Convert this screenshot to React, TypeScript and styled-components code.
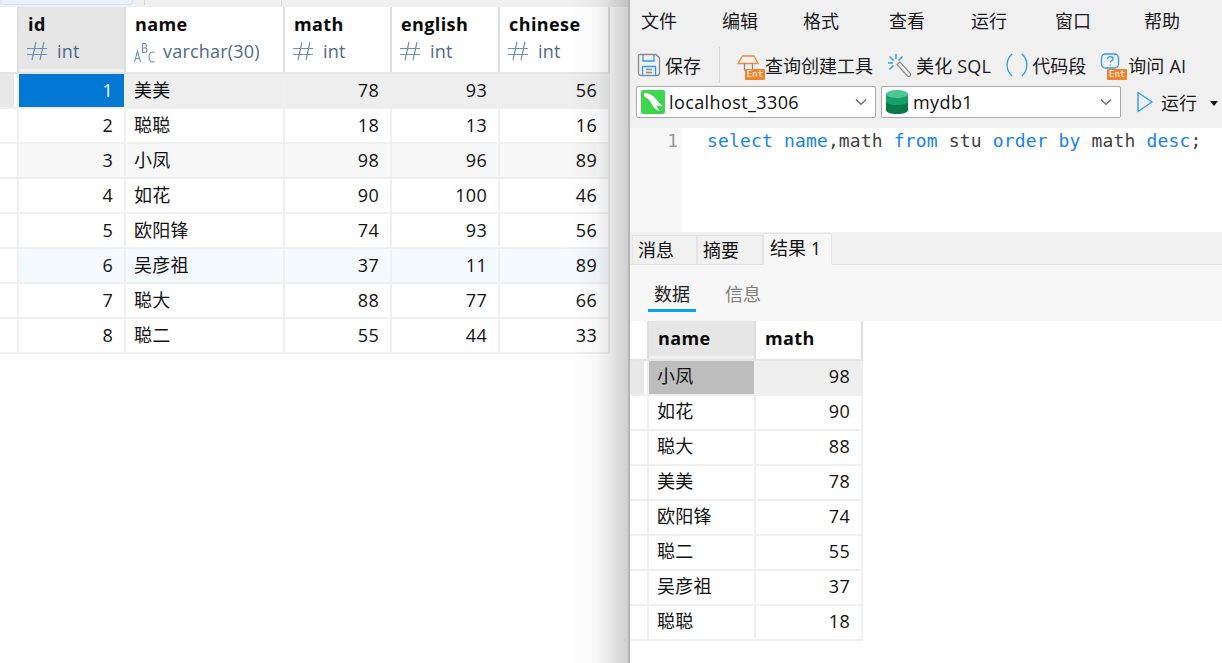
import React from 'react';
import styled, { createGlobalStyle } from 'styled-components';

const FONT = `"Open Sans", "Noto Sans CJK SC", sans-serif`;

const Global = createGlobalStyle`
  html, body { margin: 0; padding: 0; height: 100%; overflow: hidden; background: #fff; }
  #root { height: 663px; }
  * { box-sizing: border-box; }
`;

const Page = styled.div`
  display: flex;
  width: 1222px;
  height: 663px;
  font-family: ${FONT};
  font-size: 18px;
  color: #111;
  overflow: hidden;
`;

/* ---------- left window ---------- */
const LeftWindow = styled.section`
  width: 628px;
  flex: none;
  display: flex;
  flex-direction: column;
`;
const TopStrip = styled.div`
  height: 7px;
  background: #f0f0f0;
  display: flex;
  flex: none;
`;
const StripTab = styled.div`
  width: 133px;
  height: 5px;
  background: #e6f2fd;
  border: 1px solid #cfe4fa;
  border-top: 0;
  border-radius: 0 0 3px 3px;
`;
const StripDivider = styled.div<{ $ml: number }>`
  width: 1px;
  height: 5px;
  margin-left: ${p => p.$ml}px;
  background: #d8d8d8;
`;

const Table = styled.div`
  display: flex;
  flex-direction: column;
  width: fit-content;
`;
const HeaderRow = styled.div<{ $cols: string; $h: number }>`
  display: grid;
  grid-template-columns: ${p => p.$cols};
  column-gap: 2px;
  height: ${p => p.$h}px;
  background: #dedede;
  border-bottom: 2px solid #e4e4e4;
  padding-right: 2px;
`;
const HeaderCorner = styled.div`
  background: #fff;
`;
const HeaderCell = styled.div<{ $active?: boolean }>`
  background: ${p => (p.$active ? 'linear-gradient(#e6e6e6 0, #e6e6e6 calc(100% - 3px), #f0f0f0 calc(100% - 3px))' : '#fff')};
  padding: 4px 9px 0;
  overflow: hidden;
`;
const ColName = styled.div`
  font-weight: 700;
  font-size: 18px;
  letter-spacing: 0.4px;
  line-height: 26px;
  color: #0a0a0a;
`;
const ColType = styled.div<{ $gap: number }>`
  display: flex;
  align-items: center;
  gap: ${p => p.$gap}px;
  margin-left: -1px;
  line-height: 28px;
  font-size: 18px;
  letter-spacing: 0.2px;
  color: #4d6a8a;
`;
const DataRow = styled.div<{ $cols: string; $bg: string }>`
  display: grid;
  grid-template-columns: ${p => p.$cols};
  column-gap: 2px;
  height: 35px;
  background: #efefef;
  padding: 0 2px 2px 0;
  & > div { background: ${p => p.$bg}; }
`;
const RowHead = styled.div<{ $on?: boolean }>`
  && { background: ${p => (p.$on ? 'linear-gradient(90deg, #e8e8e8 14px, #fff 14px)' : '#fff')}; }
`;
const Cell = styled.div<{ $num?: boolean; $sel?: 'blue' | 'gray'; $lh?: number }>`
  line-height: ${p => p.$lh ?? 33}px;
  padding: 0 ${p => (p.$num ? '11px' : '9px')} 0 8px;
  text-align: ${p => (p.$num ? 'right' : 'left')};
  letter-spacing: 0.3px;
  white-space: nowrap;
  overflow: hidden;
  && {
    ${p => p.$sel === 'blue' && 'background:#0078d4;color:#fff;'}
    ${p => p.$sel === 'gray' && 'background:#bdbdbd;'}
  }
`;

/* ---------- right window ---------- */
const RightWindow = styled.section`
  position: relative;
  flex: 1;
  display: flex;
  flex-direction: column;
  border-left: 2px solid #b4b4b4;
  background: #fff;
  &::before {
    content: '';
    position: absolute;
    top: 0;
    bottom: 0;
    left: -62px;
    width: 60px;
    background: linear-gradient(90deg, rgba(0,0,0,0), rgba(0,0,0,.03) 50%, rgba(0,0,0,.19));
    pointer-events: none;
  }
`;
const Chrome = styled.div`
  height: 128px;
  flex: none;
  background: #f0f0f0;
  display: flex;
  flex-direction: column;
`;
const MenuBar = styled.nav`
  height: 43px;
  display: flex;
  align-items: center;
  flex: none;
`;
const MenuItem = styled.span<{ $ml: number }>`
  width: 36px;
  margin-left: ${p => p.$ml}px;
  flex: none;
  text-align: center;
  color: #1a1a1a;
  line-height: 24px;
  margin-top: -1px;
  white-space: nowrap;
`;
const ToolBar = styled.div`
  height: 43px;
  display: flex;
  align-items: center;
  padding-left: 6px;
  flex: none;
`;
const ToolButton = styled.div<{ $ml?: number; $gap?: number }>`
  display: flex;
  align-items: center;
  gap: ${p => p.$gap ?? 2}px;
  margin-left: ${p => p.$ml ?? 0}px;
  white-space: nowrap;
  color: #1a1a1a;
`;
const ToolLabel = styled.span`
  letter-spacing: 0.2px;
`;
const ToolSep = styled.div`
  width: 1px;
  height: 36px;
  background: #d8d8d8;
  margin-left: 18px;
`;
const IconWrap = styled.span`
  position: relative;
  display: inline-flex;
  width: 26px;
  height: 26px;
  flex: none;
`;
const EntBadge = styled.span`
  position: absolute;
  right: -2px;
  bottom: -2px;
  width: 20px;
  height: 11px;
  background: #f5822a;
  color: #fff;
  font-family: "DejaVu Sans Mono", monospace;
  font-size: 9px;
  line-height: 11px;
  text-align: center;
  border-radius: 1px;
`;
const SelectRow = styled.div`
  height: 32px;
  display: flex;
  align-items: center;
  padding-left: 6px;
  flex: none;
`;
const Select = styled.div<{ $w: number; $ml?: number; $gap: number }>`
  width: ${p => p.$w}px;
  height: 32px;
  margin-left: ${p => p.$ml ?? 0}px;
  background: #fff;
  border: 1px solid #a8a8a8;
  border-radius: 2px;
  display: flex;
  align-items: center;
  padding: 0 8px 0 4px;
  gap: ${p => p.$gap}px;
  flex: none;
`;
const SelectText = styled.span`
  flex: 1;
  color: #111;
  line-height: 28px;
  letter-spacing: 0.4px;
`;
const RunButton = styled.div`
  display: flex;
  align-items: center;
  margin-left: 15px;
  gap: 7px;
  color: #1a1a1a;
`;
const Caret = styled.span`
  width: 0;
  height: 0;
  margin-left: 6px;
  margin-top: 2px;
  border: 4px solid transparent;
  border-top: 5px solid #111;
  border-bottom: 0;
`;
const Editor = styled.div`
  height: 104px;
  flex: none;
  display: flex;
  background: #fff;
`;
const Gutter = styled.div`
  width: 52px;
  flex: none;
  background: #f7f7f7;
  padding-right: 4px;
  text-align: right;
  color: #999;
  font-family: "DejaVu Sans Mono", monospace;
  font-size: 18px;
  line-height: 26px;
`;
const Code = styled.code`
  font-family: "DejaVu Sans Mono", monospace;
  font-size: 18px;
  letter-spacing: 0.15px;
  line-height: 26px;
  padding-left: 25px;
  color: #3f3f3f;
  white-space: pre;
`;
const Kw = styled.span`
  color: #1681f2;
`;
const TabBar = styled.div`
  height: 33px;
  flex: none;
  display: flex;
  align-items: flex-end;
  background: #f0f0f0;
  padding-left: 2px;
  border-bottom: 1px solid #e2e2e2;
`;
const Tab = styled.div<{ $active?: boolean; $w: number }>`
  width: ${p => p.$w}px;
  height: ${p => (p.$active ? 32 : 30)}px;
  margin-bottom: -1px;
  padding-left: ${p => (p.$active ? 6 : 5)}px;
  line-height: 28px;
  background: ${p => (p.$active ? '#f7f7f7' : '#f0f0f0')};
  border: 1px solid #e4e4e4;
  border-bottom: ${p => (p.$active ? '1px solid #f7f7f7' : '1px solid #e2e2e2')};
  color: #111;
  white-space: nowrap;
`;
const SubTabs = styled.div`
  height: 56px;
  flex: none;
  background: #f7f7f7;
  display: flex;
  padding-left: 18px;
  gap: 29px;
`;
const SubTab = styled.div<{ $active?: boolean }>`
  width: ${p => (p.$active ? 48 : 36)}px;
  height: 47px;
  padding-top: 14px;
  text-align: center;
  line-height: 30px;
  color: ${p => (p.$active ? '#222' : '#7d7d7d')};
  border-bottom: 3px solid ${p => (p.$active ? '#00a4ef' : 'transparent')};
  white-space: nowrap;
`;

/* ---------- icons ---------- */
const HashIcon = () => (
  <svg width="21" height="20" viewBox="0 0 21 20" fill="none" stroke="#6d8fb8" strokeWidth="1.2">
    <path d="M0 7.500h20M0 13.500h20M9 1 5 19M17 1l-4 18" />
  </svg>
);
const AbcIcon = () => (
  <svg width="21" height="22" viewBox="0 0 21 22" fill="none" stroke="#6d8fb8" strokeWidth="1.1" style={{ marginTop: 3 }}>
    <path d="M.5 20 3.500 9l3 11M1.500 16.500h4" />
    <path d="M8.500 1.500v9h2.500c2.500 0 2.500-4.500 0-4.500H8.500M8.500 6h2c2.500 0 2.500-4.500 0-4.500h-2" />
    <path d="M20.500 10.500c-3.500-1.500-5.500.8-5.500 4.500s2 6 5.500 4.500" />
  </svg>
);
const SaveIcon = () => (
  <svg width="26" height="26" viewBox="0 0 26 26" fill="none" strokeWidth="1.3">
    <path d="M4 2.500h16l3.500 3.500v15a2.500 2.500 0 0 1-2.500 2.500H5A2.500 2.500 0 0 1 2.500 21V4A1.500 1.500 0 0 1 4 2.500Z" stroke="#8a8a8a" />
    <path d="M7 3v6h11V3" stroke="#2d9cf0" />
    <path d="M6.500 23.500V14.500h13v9" stroke="#2d9cf0" />
    <path d="M10 17.500h6M10 20.500h6" stroke="#8a8a8a" />
  </svg>
);
const QueryIcon = () => (
  <svg width="26" height="26" viewBox="0 0 26 26" fill="none" stroke="#f08a35" strokeWidth="1.3">
    <path d="M1 11.500 5.500 4h11.500l4 7.500H1Z" />
    <path d="M7.500 11.500v7M15.500 11.500v7" stroke="#8a8a8a" />
  </svg>
);
const BeautifyIcon = () => (
  <svg width="28" height="26" viewBox="0 0 28 26" fill="none" strokeWidth="1.5">
    <path d="M10 2v5M2 11h5M3.500 4.500l4 4M16.500 4.500l-4 4M3.500 17.500l4-4" stroke="#2d9cf0" />
    <path d="M11 12.500 14 10l10.500 11.500a2 2 0 0 1-3 2.500L11 12.500Z" stroke="#8a8a8a" strokeWidth="1.200" />
  </svg>
);
const SnippetIcon = () => (
  <svg width="24" height="26" viewBox="0 0 24 26" fill="none" stroke="#2d9cf0" strokeWidth="1.300">
    <path d="M7 2C.5 8 .5 18 7 24M17 2c6.500 6 6.500 16 0 22" />
  </svg>
);
const AskIcon = () => (
  <svg width="26" height="26" viewBox="0 0 26 26" fill="none" stroke="#2d9cf0" strokeWidth="1.300">
    <rect x="2.500" y="2" width="17" height="14" rx="4" />
    <path d="M8.500 7c0-3.200 5.500-3.200 5.500 0 0 1.800-2.700 1.800-2.700 3.500M11.300 12.500v1.200" />
  </svg>
);
const DolphinIcon = () => (
  <svg width="24" height="24" viewBox="0 0 24 24">
    <rect width="24" height="24" rx="2" fill="#3fd64f" />
    <path d="M3 3c5 0 9 2 12 6 2 3 4 5 7 7-3 .5-5 0-6.500-1 .5 2 1.500 4 3.500 6-4-1-6.500-3-8-6.500C9.500 11 6.500 8 4 7 3 5.500 2.800 4 3 3Z" fill="#fff" />
  </svg>
);
const DbIcon = () => (
  <svg width="22" height="24" viewBox="0 0 22 24">
    <path d="M0 4h22v16c0 2.500-4.500 4-11 4S0 22.500 0 20Z" fill="#0b7a4a" />
    <path d="M0 4h22v7c0 2.500-4.500 4-11 4S0 13.500 0 11Z" fill="#17a068" />
    <ellipse cx="11" cy="4" rx="11" ry="4" fill="#4cc796" />
  </svg>
);
const Chevron = () => (
  <svg width="12" height="8" viewBox="0 0 12 8" fill="none" stroke="#666" strokeWidth="1.200">
    <path d="M1 1.500 6 6.500l5-5" />
  </svg>
);
const PlayIcon = () => (
  <svg width="18" height="22" viewBox="0 0 18 22" fill="none" stroke="#2d9cf0" strokeWidth="1.400" strokeLinejoin="round">
    <path d="M2 1.500 16 11 2 20.500Z" />
  </svg>
);

/* ---------- data ---------- */
const students: [number, string, number, number, number][] = [
  [1, '美美', 78, 93, 56],
  [2, '聪聪', 18, 13, 16],
  [3, '小凤', 98, 96, 89],
  [4, '如花', 90, 100, 46],
  [5, '欧阳锋', 74, 93, 56],
  [6, '吴彦祖', 37, 11, 89],
  [7, '聪大', 88, 77, 66],
  [8, '聪二', 55, 44, 33],
];
const rowBg: Record<number, string> = { 0: '#eeeeee', 2: '#f7f7f7', 5: '#f4f9fd' };
const leftCols = '17px 105px 157px 105px 106px 108px';
const rightCols = '17px 105px 105px';
const results: [string, number][] = [
  ['小凤', 98], ['如花', 90], ['聪大', 88], ['美美', 78],
  ['欧阳锋', 74], ['聪二', 55], ['吴彦祖', 37], ['聪聪', 18],
];
const menus: [string, number][] = [
  ['文件', 11], ['编辑', 45], ['格式', 45], ['查看', 50], ['运行', 46], ['窗口', 48], ['帮助', 53],
];

export default function App() {
  return (
    <Page>
      <Global />
      <LeftWindow>
        <TopStrip>
          <StripTab />
          <StripDivider $ml={11} />
          <StripDivider $ml={136} />
        </TopStrip>
        <Table>
          <HeaderRow $cols={leftCols} $h={67}>
            <HeaderCorner />
            {[
              ['id', 'int'], ['name', 'varchar(30)'], ['math', 'int'], ['english', 'int'], ['chinese', 'int'],
            ].map(([n, t], i) => (
              <HeaderCell key={n} $active={i === 0}>
                <ColName>{n}</ColName>
                <ColType $gap={t === 'int' ? 9 : 8}>
                  {t === 'int' ? <HashIcon /> : <AbcIcon />}
                  <span>{t}</span>
                </ColType>
              </HeaderCell>
            ))}
          </HeaderRow>
          {students.map((s, i) => (
            <DataRow key={s[0]} $cols={leftCols} $bg={rowBg[i] ?? '#fff'}>
              <RowHead $on={i === 0} />
              <Cell $num $sel={i === 0 ? 'blue' : undefined}>{s[0]}</Cell>
              <Cell>{s[1]}</Cell>
              <Cell $num>{s[2]}</Cell>
              <Cell $num>{s[3]}</Cell>
              <Cell $num>{s[4]}</Cell>
            </DataRow>
          ))}
        </Table>
      </LeftWindow>

      <RightWindow>
        <Chrome>
          <MenuBar>
            {menus.map(([m, ml]) => (
              <MenuItem key={m} $ml={ml}>{m}</MenuItem>
            ))}
          </MenuBar>
          <ToolBar>
            <ToolButton $gap={3}><IconWrap><SaveIcon /></IconWrap><span>保存</span></ToolButton>
            <ToolSep />
            <ToolButton $ml={17}>
              <IconWrap><QueryIcon /><EntBadge>Ent</EntBadge></IconWrap>
              <span>查询创建工具</span>
            </ToolButton>
            <ToolButton $ml={13}><BeautifyIcon /><ToolLabel>美化 SQL</ToolLabel></ToolButton>
            <ToolButton $ml={14} $gap={3}><SnippetIcon /><span>代码段</span></ToolButton>
            <ToolButton $ml={13} $gap={3}>
              <IconWrap><AskIcon /><EntBadge>Ent</EntBadge></IconWrap>
              <ToolLabel>询问 AI</ToolLabel>
            </ToolButton>
          </ToolBar>
          <SelectRow>
            <Select $w={240} $gap={4}><DolphinIcon /><SelectText>localhost_3306</SelectText><Chevron /></Select>
            <Select $w={240} $ml={5} $gap={5}><DbIcon /><SelectText>mydb1</SelectText><Chevron /></Select>
            <RunButton><PlayIcon /><span>运行</span><Caret /></RunButton>
          </SelectRow>
        </Chrome>
        <Editor>
          <Gutter>1</Gutter>
          <Code>
            <Kw>select</Kw> <Kw>name</Kw>,math <Kw>from</Kw> stu <Kw>order by</Kw> math <Kw>desc</Kw>;
          </Code>
        </Editor>
        <TabBar>
          <Tab $w={65}>消息</Tab>
          <Tab $w={66}>摘要</Tab>
          <Tab $w={69} $active>结果 1</Tab>
        </TabBar>
        <SubTabs>
          <SubTab $active>数据</SubTab>
          <SubTab>信息</SubTab>
        </SubTabs>
        <Table>
          <HeaderRow $cols={rightCols} $h={40}>
            <HeaderCorner />
            <HeaderCell $active><ColName>name</ColName></HeaderCell>
            <HeaderCell><ColName>math</ColName></HeaderCell>
          </HeaderRow>
          {results.map(([n, v], i) => (
            <DataRow key={n} $cols={rightCols} $bg={i === 0 ? '#eeeeee' : '#fff'}>
              <RowHead $on={i === 0} />
              <Cell $lh={31} $sel={i === 0 ? 'gray' : undefined}>{n}</Cell>
              <Cell $lh={31} $num>{v}</Cell>
            </DataRow>
          ))}
        </Table>
      </RightWindow>
    </Page>
  );
}
